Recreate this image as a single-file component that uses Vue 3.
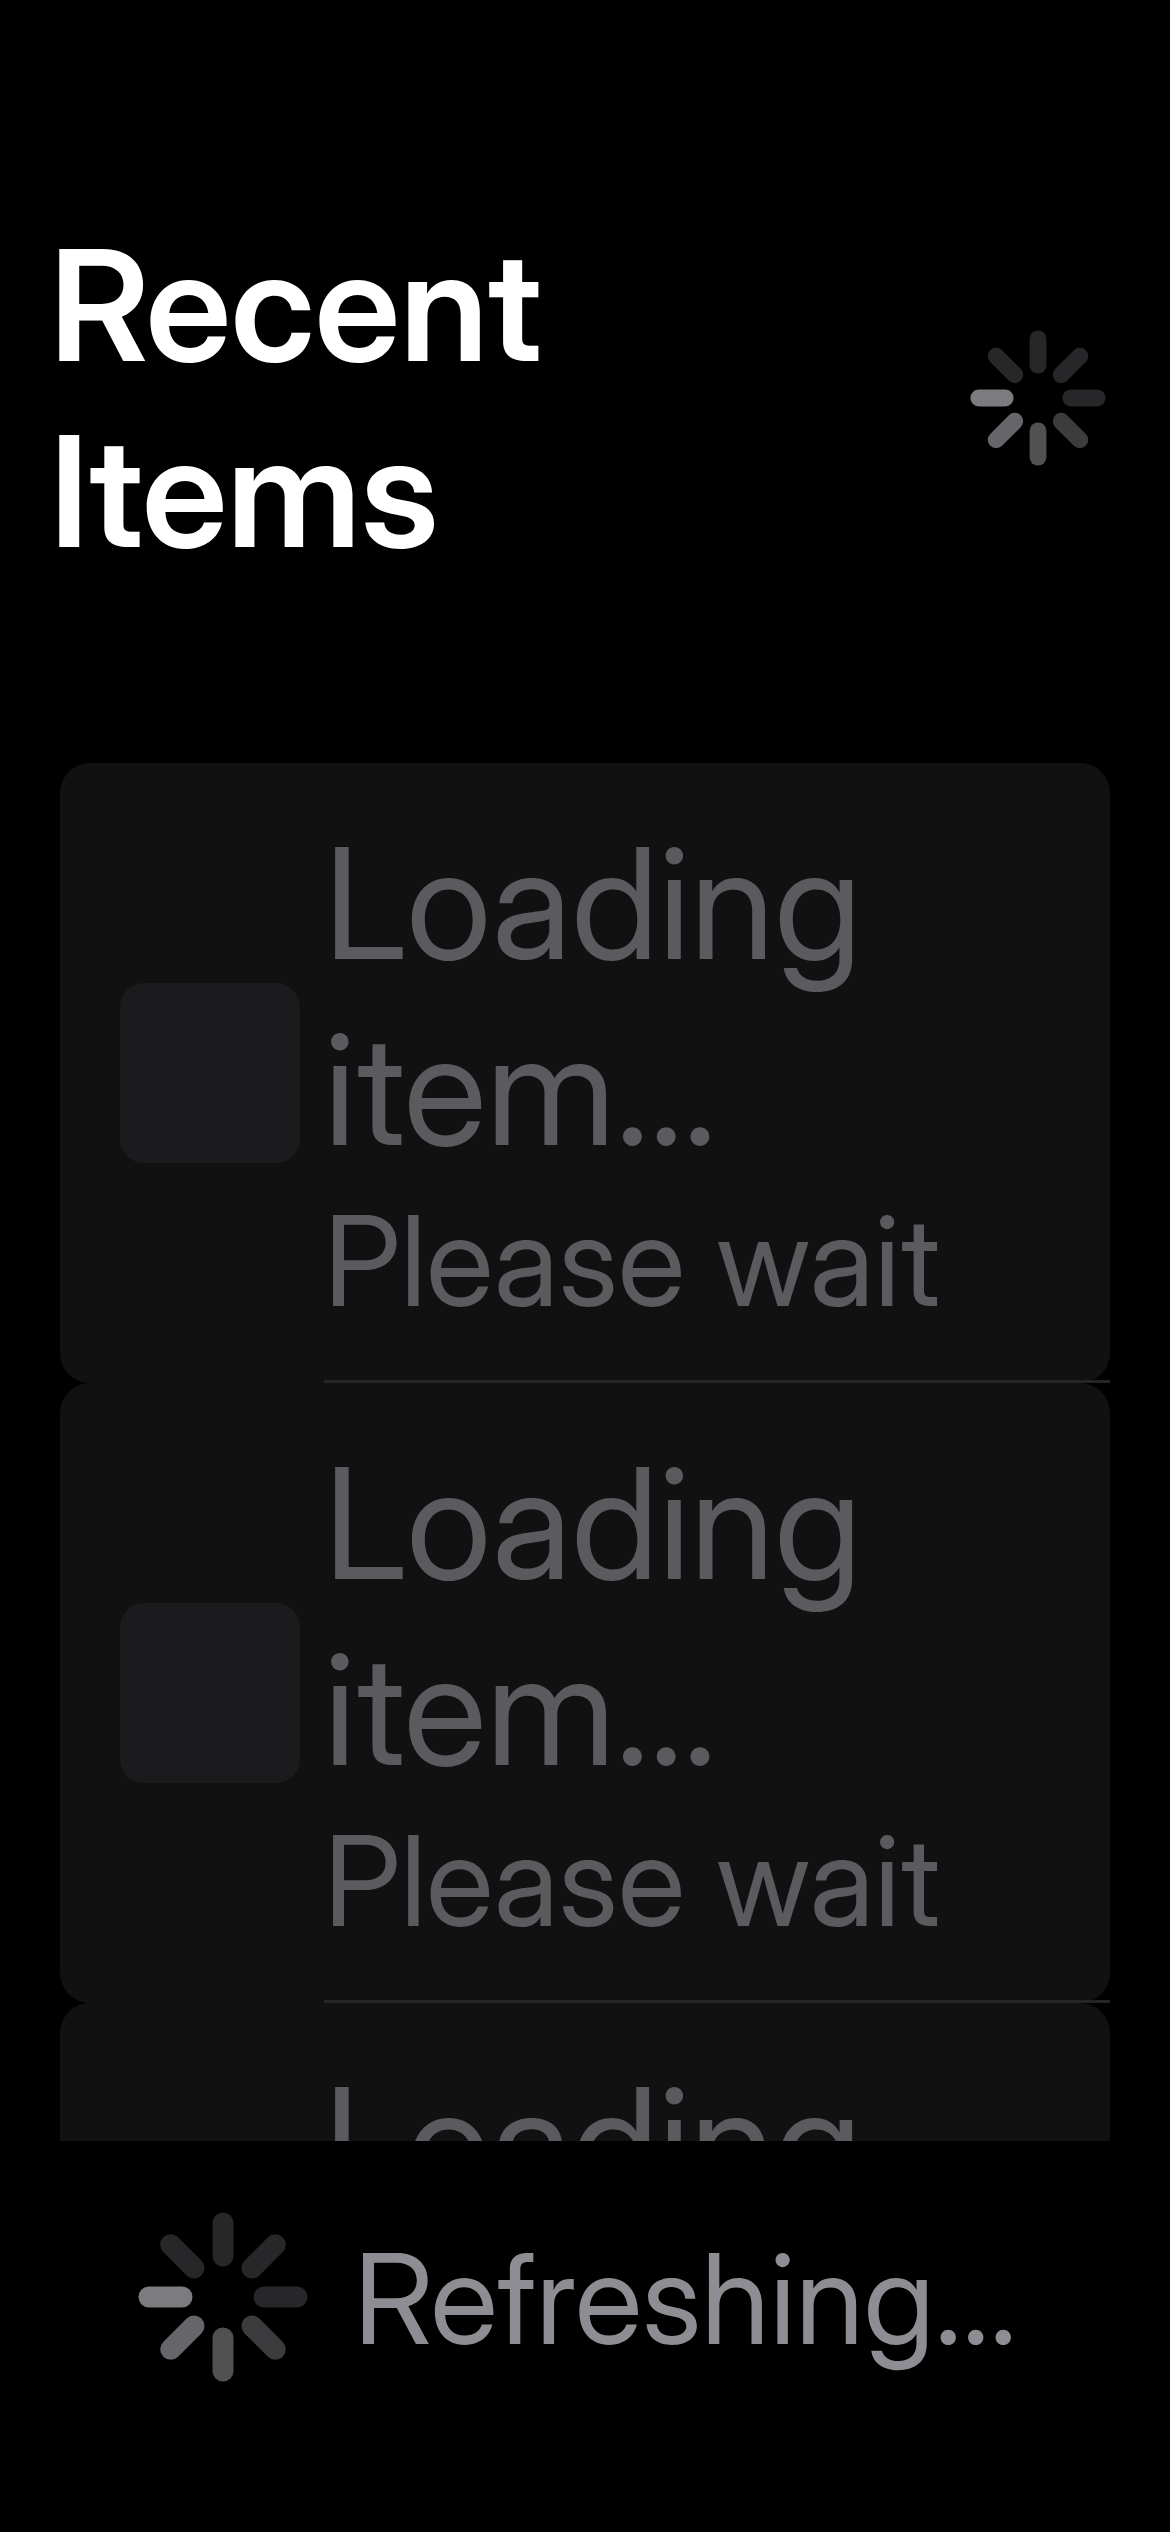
<script setup>
const placeholders = [1, 2, 3]

const spokes = [
  { angle: 0, color: '#272729' },
  { angle: 45, color: '#272729' },
  { angle: 90, color: '#272729' },
  { angle: 135, color: '#3c3c3e' },
  { angle: 180, color: '#515153' },
  { angle: 225, color: '#66656a' },
  { angle: 270, color: '#7c7b80' },
  { angle: 315, color: '#272729' },
]
</script>

<template>
  <div class="screen">
    <header class="header">
      <h1 class="title">Recent Items</h1>
      <svg class="spinner" viewBox="0 0 170 170" role="img" aria-label="Loading">
        <rect
          v-for="s in spokes"
          :key="s.angle"
          x="74.5"
          y="0.5"
          width="21"
          height="54"
          rx="10.5"
          :fill="s.color"
          :transform="`rotate(${s.angle} 85 85)`"
        />
      </svg>
    </header>

    <main class="content">
      <ul class="list">
        <li v-for="n in placeholders" :key="n" class="row">
          <div class="thumb"></div>
          <div class="texts">
            <p class="name">Loading item...</p>
            <p class="detail">Please wait</p>
          </div>
        </li>
      </ul>
    </main>

    <footer class="footer" role="status">
      <svg class="spinner spinner-large" viewBox="0 0 170 170" aria-hidden="true">
        <rect
          v-for="s in spokes"
          :key="s.angle"
          x="74.5"
          y="0.5"
          width="21"
          height="54"
          rx="10.5"
          :fill="s.color"
          :transform="`rotate(${s.angle} 85 85)`"
        />
      </svg>
      <span class="status">Refreshing...</span>
    </footer>
  </div>
</template>

<style>
body {
  margin: 0;
  background: #000;
}
</style>

<style scoped>
.screen {
  display: flex;
  flex-direction: column;
  height: 100vh;
  overflow: hidden;
  background: #000;
  color: #fff;
  font-family: "Inter Display", Inter, "Liberation Sans", sans-serif;
  font-weight: 440;
}

.header {
  display: flex;
  align-items: center;
  justify-content: space-between;
  gap: 300px;
  padding: 212px 64px 179px 50px;
}

.title {
  margin: 0;
  font-size: 154px;
  line-height: 186px;
  font-weight: 620;
}

.spinner {
  flex: none;
  width: 136px;
  height: 136px;
}

.spinner-large {
  width: 170px;
  height: 170px;
}

.content {
  flex: 1;
  min-height: 0;
  overflow: hidden;
  padding: 0 60px;
}

.list {
  margin: 0;
  padding: 0;
  list-style: none;
}

.row {
  position: relative;
  display: flex;
  align-items: center;
  gap: 24px;
  padding: 47px 60px;
  border-radius: 30px;
  background: #111;
}

.row::after {
  content: "";
  position: absolute;
  left: 264px;
  right: 0;
  bottom: 0;
  height: 3px;
  background: #252525;
}

.thumb {
  flex: none;
  width: 180px;
  height: 180px;
  border-radius: 24px;
  background: #1b1b1d;
}

.texts {
  display: flex;
  flex: 1;
  flex-direction: column;
  gap: 4px;
  min-width: 0;
  color: #5b5a5f;
}

.name,
.detail {
  margin: 0;
}

.name {
  font-size: 154px;
  line-height: 186px;
}

.detail {
  font-size: 125px;
  line-height: 150px;
  white-space: nowrap;
}

.footer {
  display: flex;
  align-items: center;
  gap: 46px;
  padding: 71px 45px 150px 138px;
}

.status {
  padding-top: 4px;
  font-size: 125px;
  line-height: 150px;
  color: #8e8d93;
}
</style>
